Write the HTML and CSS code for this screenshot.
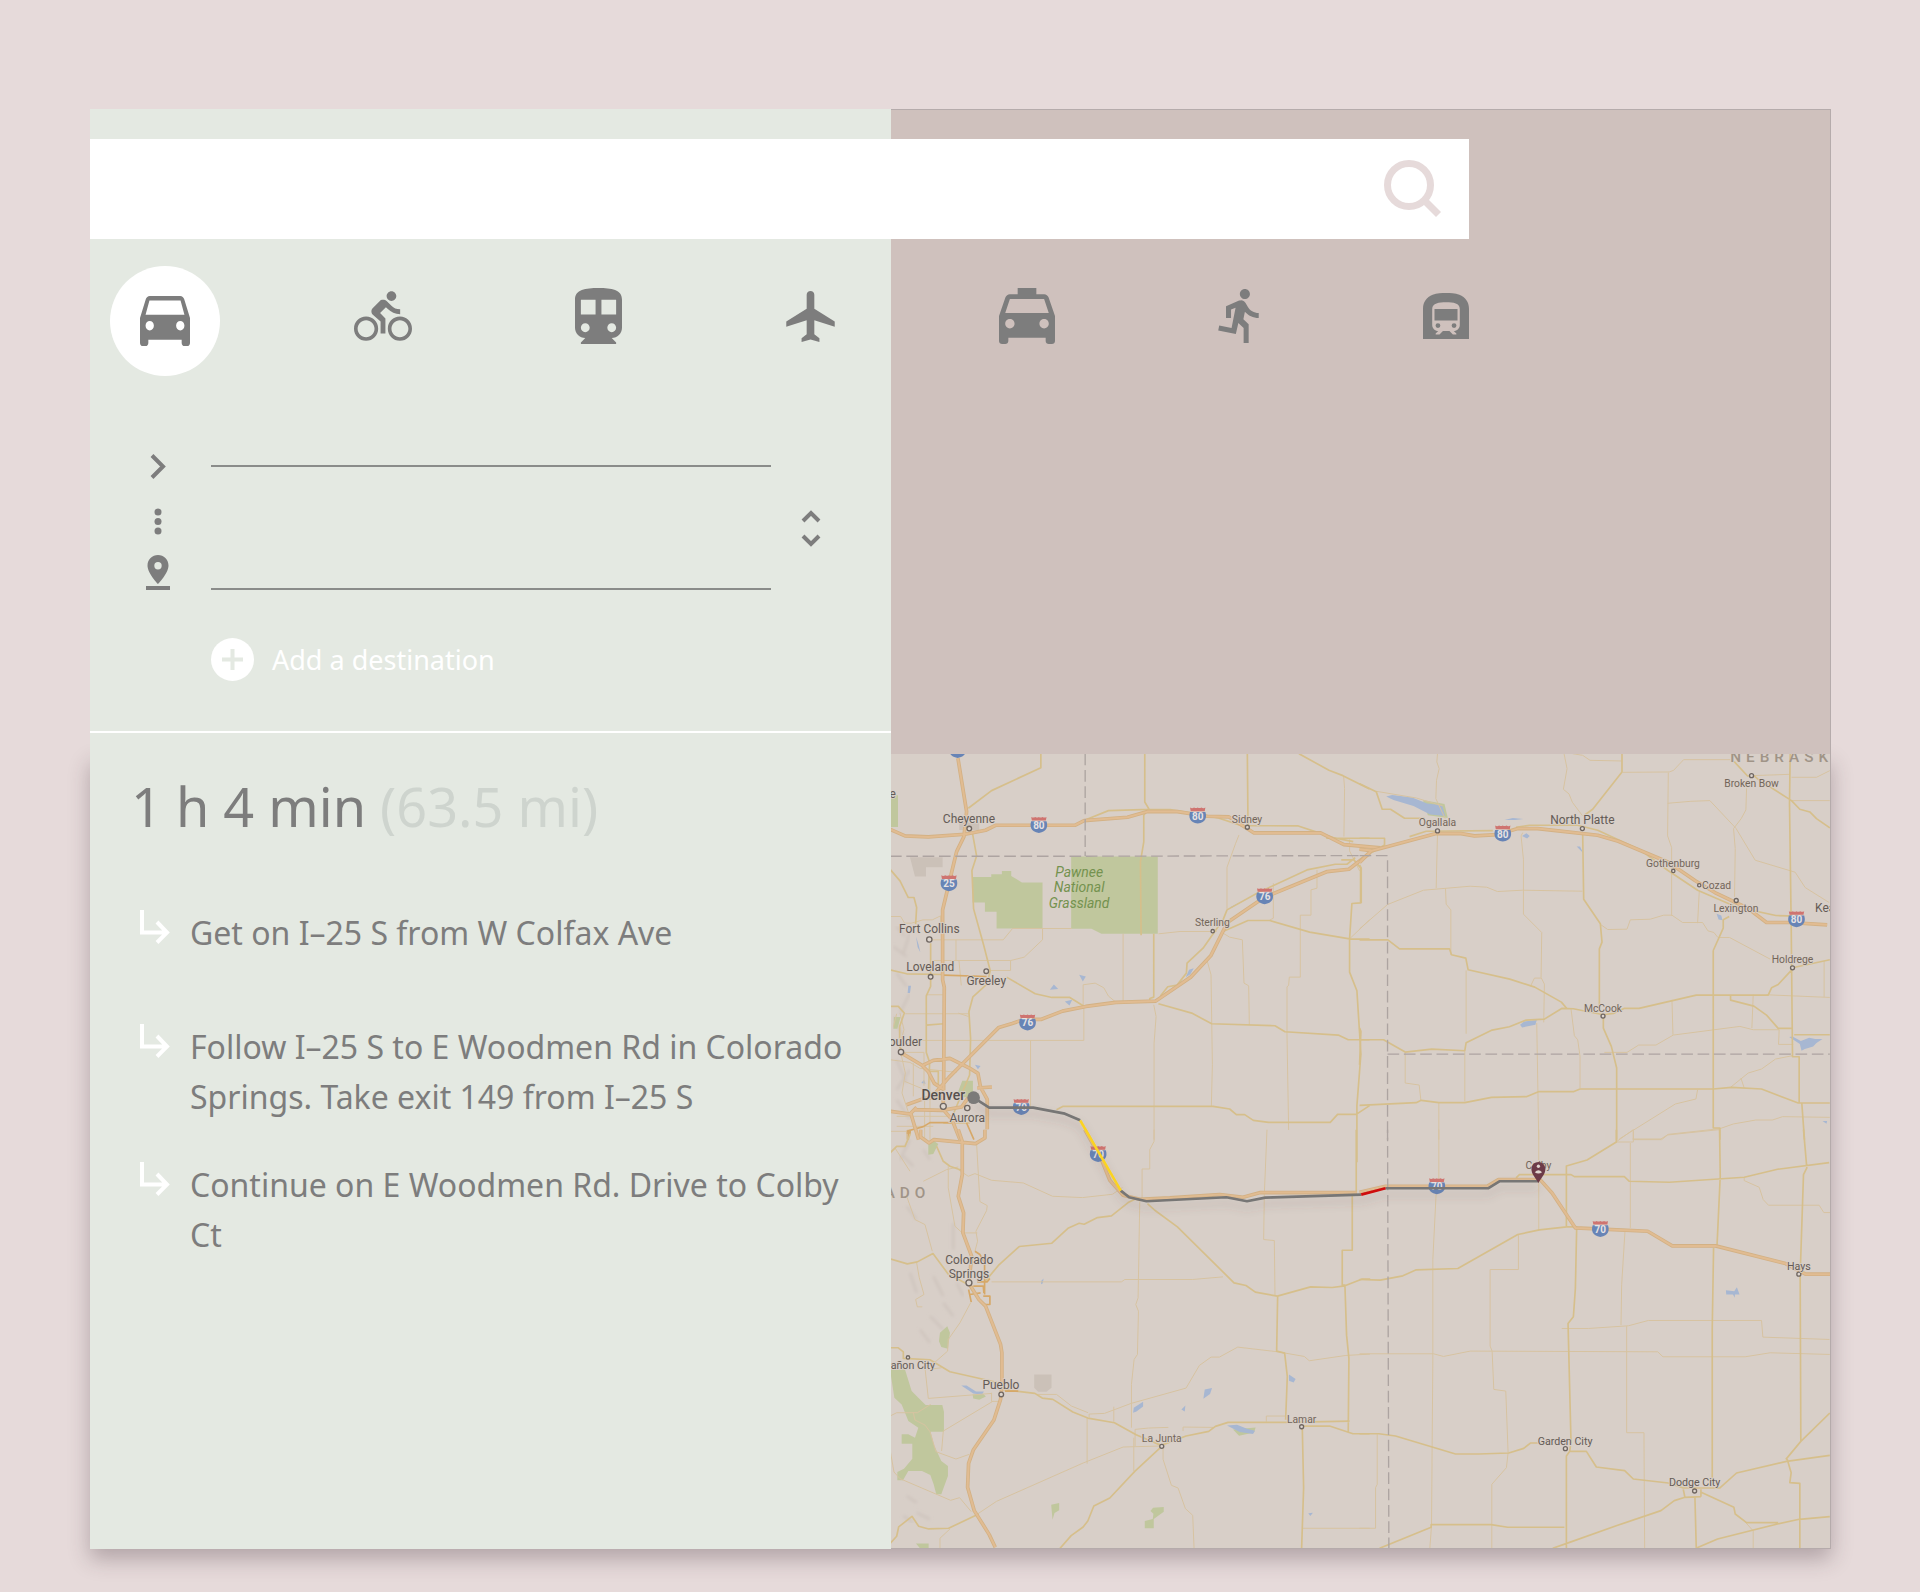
FILE: index.html
```html
<!DOCTYPE html>
<html lang="en">
<head>
<meta charset="utf-8">
<meta name="viewport" content="width=device-width, initial-scale=1">
<title>Directions</title>
<link rel="stylesheet" href="styles.css">
</head>
<body>
<main class="page">
<div class="card">
  <header class="topbar">
    <form class="search" role="search">
      <input class="search-input" type="search" aria-label="Search the map">
      <button class="search-button" type="button" aria-label="Search">
        <svg width="58" height="58" viewBox="0 0 58 58" fill="none" stroke="currentColor" stroke-width="7"><circle cx="25" cy="25" r="21.5"/><path d="M41 41l13.500 13.500"/></svg>
      </button>
    </form>
    <nav class="modes" aria-label="Travel mode">
      <button class="mode mode-active" type="button" aria-label="Car"><svg width="50" height="50" viewBox="3 5 18 16" preserveAspectRatio="none"><path d="M18.920 6.010C18.720 5.420 18.160 5 17.500 5h-11c-.66 0-1.210.42-1.420 1.010L3 12v8c0 .55.45 1 1 1h1c.55 0 1-.45 1-1v-1h12v1c0 .55.45 1 1 1h1c.55 0 1-.45 1-1v-8l-2.080-5.990zM6.500 16c-.83 0-1.500-.67-1.500-1.500S5.670 13 6.500 13s1.500.67 1.500 1.500S7.330 16 6.500 16zm11 0c-.83 0-1.500-.67-1.500-1.500s.67-1.500 1.500-1.500 1.500.67 1.500 1.500-.67 1.500-1.500 1.500zM5 11l1.400-4.600h11.200L19 11H5z"/></svg></button>
      <button class="mode" type="button" aria-label="Bicycle"><svg width="58" height="50" viewBox="0 1.500 24 20.500"><path d="M15.500 5.500c1.100 0 2-.9 2-2s-.9-2-2-2-2 .9-2 2 .9 2 2 2zM5 12c-2.800 0-5 2.200-5 5s2.200 5 5 5 5-2.200 5-5-2.200-5-5-5zm0 8.500c-1.900 0-3.500-1.600-3.500-3.500s1.600-3.500 3.500-3.500 3.500 1.600 3.500 3.500-1.600 3.500-3.500 3.500zm5.800-10l2.400-2.400.8.8c1.300 1.300 3 2.100 5.100 2.100V9c-1.500 0-2.700-.6-3.600-1.500l-1.900-1.900c-.5-.4-1-.6-1.600-.6s-1.100.2-1.400.6L7.800 8.400c-.4.4-.6.9-.6 1.400 0 .6.200 1.100.6 1.400L11 14v5h2v-6.200l-2.200-2.300zM19 12c-2.800 0-5 2.200-5 5s2.200 5 5 5 5-2.200 5-5-2.200-5-5-5zm0 8.500c-1.900 0-3.500-1.600-3.500-3.500s1.600-3.500 3.500-3.500 3.500 1.600 3.500 3.500-1.600 3.500-3.500 3.500z"/></svg></button>
      <button class="mode" type="button" aria-label="Train"><svg width="47" height="56" viewBox="4 2 16 19"><path d="M12 2c-4.420 0-8 .5-8 4v9.500C4 17.430 5.570 19 7.500 19L6 20.500v.5h12v-.5L16.500 19c1.930 0 3.500-1.570 3.500-3.500V6c0-3.500-3.580-4-8-4zM7.500 17c-.83 0-1.500-.67-1.500-1.500S6.670 14 7.500 14s1.500.67 1.500 1.500S8.330 17 7.500 17zm3.500-6H6V6h5v5zm5.500 6c-.83 0-1.500-.67-1.500-1.500s.67-1.500 1.500-1.500 1.500.67 1.500 1.500-.67 1.500-1.500 1.500zm1.500-6h-5V6h5v5z"/></svg></button>
      <button class="mode" type="button" aria-label="Plane"><svg width="49" height="51" viewBox="2 2 19 20"><path d="M21 16v-2l-8-5V3.500c0-.83-.67-1.500-1.500-1.500S10 2.670 10 3.500V9l-8 5v2l8-2.500V19l-2 1.500V22l3.500-1 3.500 1v-1.500L13 19v-5.500l8 2.500z"/></svg></button>
      <button class="mode" type="button" aria-label="Taxi"><svg width="56" height="56" viewBox="3 3 18 18"><path d="M18.920 6.010C18.720 5.420 18.160 5 17.500 5H15V3H9v2H6.500c-.66 0-1.210.42-1.420 1.010L3 12v8c0 .55.45 1 1 1h1c.55 0 1-.45 1-1v-1h12v1c0 .55.45 1 1 1h1c.55 0 1-.45 1-1v-8l-2.080-5.990zM6.500 16c-.83 0-1.500-.67-1.500-1.500S5.670 13 6.500 13s1.500.67 1.500 1.500S7.330 16 6.500 16zm11 0c-.83 0-1.500-.67-1.500-1.500s.67-1.500 1.500-1.500 1.500.67 1.500 1.500-.67 1.500-1.500 1.500zM5 11l1.500-4.500h11L19 11H5z"/></svg></button>
      <button class="mode" type="button" aria-label="On foot"><svg width="41" height="56" viewBox="2.800 1.400 16.300 21.600"><path d="M13.490 5.480c1.100 0 2-.9 2-2s-.9-2-2-2-2 .9-2 2 .9 2 2 2zm-3.600 13.900l1-4.400 2.100 2v6h2v-7.500l-2.100-2 .6-3c1.300 1.500 3.300 2.500 5.500 2.500v-2c-1.900 0-3.500-1-4.300-2.400l-1-1.600c-.4-.6-1-1-1.700-1-.3 0-.5.1-.8.1l-5.200 2.200v4.700h2v-3.400l1.800-.7-1.600 8.100-4.900-1-.4 2 7 1.400z"/></svg></button>
      <button class="mode" type="button" aria-label="Subway"><svg width="46" height="46" viewBox="2 2 20 20"><path d="M17.800 2.800C16 2.090 13.860 2 12 2s-4 .09-5.800.8C3.530 3.840 2 6.050 2 8.860V22h20V8.860c0-2.810-1.530-5.020-4.200-6.060zm.2 13.080c0 1.450-1.180 2.620-2.630 2.620l1.130 1.120V20H15l-1.500-1.500h-2.830L9.170 20H7.500v-.38l1.120-1.120C7.180 18.500 6 17.320 6 15.880V9c0-2.630 3-3 6-3 3.320 0 6 .38 6 3v6.880zM7 9h10v5H7zM8.500 15.100a1.050 1.050 0 100 2.100 1.050 1.050 0 000-2.100zm7 0a1.050 1.050 0 100 2.100 1.050 1.050 0 000-2.100z" fill-rule="evenodd"/></svg></button>
    </nav>
  </header>

  <section class="sidebar">
    <form class="planner">
      <div class="route">
        <div class="route-marks" aria-hidden="true">
          <svg width="26" height="25" viewBox="0 0 26 25" fill="none" stroke="currentColor" stroke-width="4"><path d="M7 1.500l11 11-11 11"/></svg>
          <svg width="26" height="36" viewBox="0 0 26 36" fill="currentColor"><circle cx="13" cy="13" r="3.500"/><circle cx="13" cy="22.500" r="3.500"/><circle cx="13" cy="32" r="3.500"/></svg>
          <svg width="26" height="35" viewBox="0 0 26 35" fill="currentColor"><path fill-rule="evenodd" d="M13 0C7.300 0 2.500 4.500 2.500 10.500 2.500 18.500 13 29 13 29s10.500-10.500 10.500-18.500C23.500 4.500 18.700 0 13 0zm0 7a3.700 3.700 0 110 7.400A3.700 3.700 0 0113 7z"/><path d="M1 31h24v4H1z"/></svg>
        </div>
        <div class="fields">
          <input class="field" type="text" aria-label="Starting point">
          <input class="field" type="text" aria-label="Destination">
        </div>
        <button class="swap" type="button" aria-label="Swap start and destination">
          <svg width="20" height="38" viewBox="0 0 20 38" fill="none" stroke="currentColor" stroke-width="4"><path d="M2 12l8-8 8 8M2 27l8 8 8-8"/></svg>
        </button>
      </div>
      <button class="add" type="button">
        <svg width="43" height="43" viewBox="0 0 43 43"><circle cx="21.500" cy="21.500" r="21.500" fill="currentColor"/><path class="add-plus" d="M21.500 11v21M11 21.500h21"/></svg>
        <span>Add a destination</span>
      </button>
    </form>
    <div class="directions">
      <h1 class="summary">1 h 4 min <span class="distance">(63.5 mi)</span></h1>
      <ol class="steps">
        <li class="step"><svg class="turn" width="30" height="34" viewBox="0 0 30 34"><path d="M2 0v22.500h24M17 12l10 10.500-10 10"/></svg><span>Get on I–25 S from W Colfax Ave</span></li>
        <li class="step"><svg class="turn" width="30" height="34" viewBox="0 0 30 34"><path d="M2 0v22.500h24M17 12l10 10.500-10 10"/></svg><span>Follow I–25 S to E Woodmen Rd in Colorado Springs. Take exit 149 from I–25 S</span></li>
        <li class="step"><svg class="turn" width="30" height="34" viewBox="0 0 30 34"><path d="M2 0v22.500h24M17 12l10 10.500-10 10"/></svg><span>Continue on E Woodmen Rd. Drive to Colby Ct</span></li>
      </ol>
    </div>
  </section>

  <svg class="map" viewBox="0 0 2820 2385" preserveAspectRatio="xMidYMid slice" role="img" aria-label="Route from Denver to Colby">
    <defs>
      <g id="shield">
        <path class="shield-top" d="M-23-24q6 4 12 0 6 3 11 0 5 3 11 0 6 4 12 0l-2 11H-21z"/>
        <path class="shield-body" d="M-23-11h46c5 16 2 30-23 35-25-5-28-19-23-35z"/>
      </g>
      <filter id="soft" x="-5%" y="-30%" width="110%" height="180%"><feDropShadow dx="0" dy="18" stdDeviation="12" flood-color="#5a4a4a" flood-opacity=".25"/></filter>
      <filter id="relief" x="0" y="0" width="100%" height="100%"><feGaussianBlur stdDeviation="4"/></filter>
    </defs>

    <!-- north-west: Cheyenne, Fort Collins, Denver -->
    <g transform="translate(-3 -42)">
      <path class="relief" d="M20 560l25 30M10 620l40 30M60 580l-20 60M20 700l30 40M60 760l-30 60M10 830l30 60M20 960l30 70M60 990l-40 60M20 1080l40 60"/>
      <path class="town" d="M60 352h98v30h-50v28H75zM208 248h60v22h-60z"/>
      <path class="park" d="M0 166h24v95H0zM248 411h56v-8h32v-10h28v15l32 20h62v138H320v-50h-35v-28h-37zM544 350h260v232H635l-30-15h-61zM12 832h20l-10 35H10zM205 1055l12-32h32v50h-40z"/>
      <path class="water" d="M78 590l8 25 5 22-8-15zM55 738h8l-3 22h-7zM480 750l12-16 13 14zM568 705l20 5-9 15zM525 785l22-5-8 17zM888 712l10-22 14-5-10 18zM1020 503l28-14-20 14zM94 1030l8-10 5 12zM255 975l17 4-8 10z"/>
      <path class="minor" d="M1362 107l3 38-2 145M1048 285l-10 25-26 72v125M1151 430v105l-11 6M1282 390v55l-18 5v76h-32v186h-33l-2 25-5 4v140l5 290M118 600h222l28-34h178M458 566v34l-55 52-40 10H120M198 600v62M362 662v30h-62M207 662l7 75M108 765h50M46 822h190M700 582v205M580 800v-65l36-5 26 14 14 25 22 18M582 800v102H70M422 902v200M806 582l65-7h110M1000 580l20 12 38 8 5 130 14 8 2 118M950 655l14 50 4 270-3 125M792 795l7 35-6 80v290M1380 298v35l30 60M1440 540l-60 57M0 530h32l12 20h20l35-10h28l25-12v30M20 822l-10 40M42 938h60v100M30 820l12 50-14 50 18 80-10 60 20 60M0 960l60 8 30 18 110 12M44 1025l60 25v150M70 970v100M120 990v210M20 1130h260M20 1160h110M0 1175h50v25M205 820l30 10"/>
      <path class="major" d="M453 41v42L305 152l-70 53M0 388l30 35 25 50h17l8 30-3 50M248 282l12 66-14 44 5 115 30 108 20 78-10 40-42 38-12 45 5 80-3 110-50 120M122 610v130l-13 28v170l10 30-4 100M109 856l52-4M0 690l50 12 110 2M350 712l86 50 50 11h54l40 25M765 41v145l12 20-15 20v80l-10 60 2 220M792 582v190l-12 4v12M1073 41l2 215M1228 41l90 50 42 16 80 40M586 240l70-28 100-3h85l60 10 85 15 70 23 170 1 60 20 45 15 60 12M1310 295h130M1000 540l12-30 90-50 150-70 85-17h35l25-20M1000 540l-60 85-48 45-2 30-28 36-28 5-22 28M1000 575l75-33h65l120 35 120 20 60 1M1355 360h38l20 24v105l-26 2-7 106v100l22 56 12 190-12 155v170M806 792l100 28 60 32 190 6 30 18 160 10 30 14h64M500 1110l20-10h450l50 8 20 17h25l26 17 46 6h185l22-24h56l40-26M0 800l25 0 18 20-14 40v60l10 20M160 1150h80M110 995h35v40"/>
      <path class="arterial" d="M160 706l130 4M50 1175l50-14 20-12h70M55 1200v-30M230 1150l22 50"/>
      <g class="highway-edge"><path id="nw-hwy" d="M204 55l26 160-8 75-22 45-30 125-12 50v210l5 22-2 310M0 268l45 20 70 3 110-8 62-12 30-15h238l28-14 130-10 60-17h90l90 14 65 2 75 48h200l70 35 110 10M1440 340l-62 48-65 7-190 78-110 75-50 100-60 64-105 72-120 4-90 12-70 14-65 25h-50l-36 12-40 12-110 110-40 40-40 46M35 940l60 36 20 20 18 35 30 20M100 976l30-14 50-6 60 30 24 15 8 42 20 36v90M262 1045l44-3M50 1095l50-18 60-5M75 1110l80 2 60-10 20-28M0 1115l60 8 20-20M62 1120l24 80M160 1060v50l26 30 24 60"/></g>
      <use href="#nw-hwy" class="highway"/>
      <path class="border" d="M586 41v307M0 349h586l854-2"/>
      <use href="#shield" x="203" y="30"/><use href="#shield" x="447" y="255"/><use href="#shield" x="924" y="227"/><use href="#shield" x="177" y="430"/><use href="#shield" x="1125" y="469"/><use href="#shield" x="413" y="848"/><use href="#shield" x="394" y="1102"/>
      <g class="shield-no"><text x="447" y="267">80</text><text x="924" y="239">80</text><text x="177" y="442">25</text><text x="1125" y="481">76</text><text x="413" y="860">76</text><text x="394" y="1114">70</text></g>
      <g class="dot"><circle cx="238" cy="266" r="7"/><circle cx="118" cy="599" r="8"/><circle cx="122" cy="711" r="7"/><circle cx="289" cy="694" r="7"/><circle cx="33" cy="937" r="8"/><circle cx="160" cy="1100" r="9"/><circle cx="232" cy="1105" r="8"/><circle cx="1073" cy="262" r="6"/><circle cx="969" cy="574" r="5"/></g>
      <g class="city"><text x="237" y="250">Cheyenne</text><text x="118" y="581">Fort Collins</text><text x="121" y="695">Loveland</text><text x="289" y="735">Greeley</text><text x="35" y="920">Boulder</text><text x="232" y="1147">Aurora</text><text x="8" y="174">e</text></g>
      <g class="city city-main"><text x="160" y="1080">Denver</text></g>
      <g class="city city-small"><text x="1072" y="249">Sidney</text><text x="968" y="560">Sterling</text></g>
      <g class="park-name"><text x="568" y="410">Pawnee</text><text x="568" y="457">National</text><text x="568" y="503">Grassland</text></g>
    </g>

    <!-- north-east: Nebraska -->
    <g transform="translate(1407 -42)">
      <path class="park" d="M190 180l65 12 10 42-60-8z"/>
      <path class="water" d="M80 170l18-5 60 8 45 18 45 5 9 32-45-4-50-26-60-18zM435 240l25-6 32 3-25 3zM488 288l13-8 10 8-8 8zM652 320l10 0 10 20zM1072 522l14 5 4 14-12-2zM482 855l12-10 38-4-4 14-40 8zM1290 892l10-2 25 14 25-10 18 4 22 0-18 12-10 10-25 8-10 5-5-20zM1390 1144l14 0-2 8z"/>
      <path class="minor" d="M234 41l-2 25 7 20-8 35-2 55 28 60M50 154l120 20 80 24M234 280l-4 165M614 41l9 45-11 62 17 14 10 25 30 40M640 41l30 5 22 15 95 2M790 97l140-1 13-5 30-32h140M927 98l-2 190 12 35v205M925 190l70-6 57-2 78 83 58 96 120 36 30 46 72 45M1162 145l-2 65-14 26-23 30 5 60-2 145M1297 112h75l40-20M1180 107l112-4M1296 182h116M0 567l84-73 108-43 140-12 50 3 32 13 75-4 180 3M258 445l2 48 14 17v135M490 278l-5 10 7 70v165l55 55-2 135 10 20-2 115M513 740l12-25h20M725 555l20 14 58-1 10-28 60-2 40-12h25l32 22h60l16 25 18 5 12 15h35l122 65M1020 455l-5 95M320 692v190M137 938v92l42 6 5 45M316 935v150M532 850l6 350M635 808l10 80 10 12 7 50v95M735 938h68l35-22h52l52-30 200-26 40 10h78M938 780l3 105M1182 765l-4 100M1260 870l-2 44h44M1222 765l190 8M1395 664v108M780 1198l168-105 62-15 5-28M822 1200v-25M1115 1042l52-42 40-12 42-30 50-10M1145 1015l10 30M820 1198h85l22-14 155-17 40-14 68-12h50l30-10 142 2M238 1090v110"/>
      <path class="major" d="M0 131l50 24 18 53h25l42 27h60M0 295h75v20l-60 35M788 41v55l-88 112-25 18M1125 65l40 43h20l12 10 100 64 25 26 30 8 20 20 40 28M1293 41l-2 150 5 360 4 400 20 0v140M0 600h85l35 27h150l6 18 43 10 7 35 125 28 75 24 80 45 17 20M0 900h72l65 37 80-9 99 5 4-24 78-38 52-10 50-20 55-3 52-32 35 1 90 18 30-4 32-15h45l172-40h216l10-22 20-10 40-43M1300 684l112-24M1062 632v533h20v35M1062 632l30-67v-25l18-10M670 285l3 193 50 74 5 55-8 20v190M732 835v30l24 55 16 65v215M0 1097l170-8 15-7 53 7h78l80-16 105-2 36-15h105l20-8h400l55-5 90 5 110 42h95M1328 1092l8 108M1114 765v16l70 18 38 27 35 40h43M1305 885h107M150 290l50-16 200-2M470 262l40-6h145l60 15 130 60 80 60 90 60 115 50 120 26 62 2M0 375l5 10v105M0 865l4 10-4 100"/>
      <g class="highway-edge"><path id="ne-hwy" d="M0 328l35 4M0 368l35-35 195-52h75l40 7 70-4 60-18h60l180 20 62 18 150 63 80 55 60 36 100 48 55 42h70l112 7"/></g>
      <use href="#ne-hwy" class="highway"/>
      <path class="border" d="M0 347h84v853M84 943h1328"/>
      <use href="#shield" x="430" y="281"/><use href="#shield" x="1312" y="538"/>
      <g class="shield-no"><text x="430" y="293">80</text><text x="1312" y="550">80</text></g>
      <g class="dot"><circle cx="234" cy="273" r="6"/><circle cx="669" cy="266" r="6"/><circle cx="942" cy="393" r="5"/><circle cx="1020" cy="436" r="5"/><circle cx="1131" cy="482" r="6"/><circle cx="1177" cy="107" r="6"/><circle cx="1300" cy="684" r="6"/><circle cx="731" cy="829" r="6"/></g>
      <g class="city city-small"><text x="234" y="258">Ogallala</text><text x="941" y="380">Gothenburg</text><text x="1072" y="446">Cozad</text><text x="1130" y="515">Lexington</text><text x="1177" y="141">Broken Bow</text><text x="1300" y="671">Holdrege</text><text x="731" y="817">McCook</text></g>
      <g class="city"><text x="669" y="252">North Platte</text><text x="1398" y="516">Kea</text></g>
      <text class="state" x="1113" y="67">NEBRASK</text>
    </g>

    <!-- south-west: Colorado Springs, Pueblo -->
    <g transform="translate(-3 1128)">
      <path class="relief" d="M40 80l30 30M60 30l-30 60M100 60l20 30M50 230l30 40M190 280v80M130 440l30 60M160 520l30 40M120 560l40 40M200 460l20 40M90 600l30 40M60 430l20 60M50 1100l30 20M80 1150l40 20M40 1160l30 20"/>
      <path class="town" d="M433 735h52v40l-15 12h-25l-12-12z"/>
      <path class="park" d="M115 45l18-10 12 8-15 30-15 2zM172 590l8 20-6 48-20-5-7-18 3-25zM0 720h45l20 65 20 20 22 22h50l5 20v60h-40l10 40 22 48 20 15v30l-20 55h-15l-8-30-10-28-25-12H55l-16 28H22v-25l20-10 25-30v-45H35v-28h20l20 10 10-30-30-20-20-50-22-20zM484 1126l24-5v22l-14 8-6 20zM782 1145l8-10 32-2v14l-30 22v28h-27v-22l24-6 2-16zM1030 900l68-6-5 15-45 10zM248 795l32-2 8 8-20 10-18-4zM78 1243h38v14H90z"/>
      <path class="water" d="M214 768h16l28 18 24 0-6 10-26-4zM453 455l8-8-2 14-5 3zM732 835l28-18v14l-20 15-10 4zM945 780l22-4-6 18-20 14zM875 840l12-12-2 18zM1198 735l20 14-6 10-14-5zM1012 888l30-2 30 12 24 6-6 10-40-6zM1256 1152l14-2-8 10z"/>
      <path class="minor" d="M260 41l10 175 22 12-2 15-32 62 5 30-8 30M205 120l30 20 20-8 50 20 95 8 88 40 90 4 90-10 30-20M100 155l70-35 35-8M175 110v65l20 115 22 20h45M50 200l25 70 30 15 22 80M80 400l8 45 14 50-25 15 5 22h15M242 520l-32 60-35 50-2 35-40 35M105 715l10 92 190-15M115 720l40-5M0 860l20-10h62l40-25M70 850l5 22 30 15 15 20 18 60 60 22 40-14M0 960l12 68 18 20 152 65 27-8 35 42M150 1257v-30l30-28M260 1156l60-40 260-115 120-48 110-3M305 457h390l10-7h203l92-8M750 215l-5 290-7 20 8 20-3 130-10 15-8 75v130M732 925v100M736 950v-50l40-4 60-2M592 865v138M598 864v-10l46-2 80-30 165-46 40-68 35-25h25l55-30 120 14 80 14 15 13 110-16 72-4M672 832v45M820 955v35l25 78 20 8 22 62 22 20 4 100M1132 0l-8 195-2 135 32 3 2 165M793 0v35l-13 25v58h-23v90M1130 860h58M1130 877v-17M880 905v-12l90 1M440 795h60l45 35 50 20M1240 1197h200M310 815l-150 90-5 60M305 790v26h20M15 55l45 70"/>
      <path class="major" d="M0 70l20-20h25l15-35V0M140 50l20 45 20 15 35 12M0 388l52 15 30-6 47-25 46 62 30 15 22 12M286 455l42-50 60-54 98-10 50-46 32-14 15 3 40-20 42-5 50-40 25-12M773 222l22 20 68 50 170 168 36 8 28 20 66 12 100-28 65 2 38-5 50-20h26M1164 500l-3 165 24 6 8 70-5 130M1388 195v167h-30v105l8 0 5 150 7 70-2 220M1400 0v190M0 655h25l15 12v20l80 4 60 36 80 18 60 14 15 20M335 780l100 12 22 14 32 4 60 38 45 18 80 14 65 36 75 32 75-28 68-14 20-15 38-12h175l190-4M1240 890h80l70 23h50M1238 895l4 180-6 182M815 952l-80 74-75 80-48 24-18 45-14 18-36 26-35 40M0 1243l20-22 6-28 40-32 20 30 30 8 60-2 90-43"/>
      <path class="arterial" d="M60 0v10h-10M255 365l15 10 14 25v95M236 480l8 38M262 457h30l8-10M250 470h30l2 20M280 500h20v25h-18M240 495l32-5M345 785h40"/>
      <g class="highway-edge"><path id="sw-hwy" d="M92 0v22l25 18 15-10 125 12 28-17V0M205 0l12 35v100l-12 65 16 50-2 60 26 70-8 82 30 48 20 20 45 115 4 25v100l-4 40-20 62-62 90-14 40-3 72 20 70 45 72 18 38M585 0l50 90 25 62 40 45 50 12 90-4 150-10 70 8 52-14h290"/></g>
      <use href="#sw-hwy" class="highway"/>
      <use href="#shield" x="625" y="73"/>
      <g class="shield-no"><text x="625" y="85">70</text></g>
      <g class="dot"><circle cx="237" cy="460" r="9"/><circle cx="334" cy="795" r="7"/><circle cx="54" cy="684" r="5"/><circle cx="816" cy="951" r="6"/><circle cx="1236" cy="892" r="6"/></g>
      <g class="city"><text x="238" y="403">Colorado</text><text x="237" y="444">Springs</text><text x="333" y="780">Pueblo</text></g>
      <g class="city city-small"><text x="816" y="938">La Junta</text><text x="1236" y="880">Lamar</text></g>
      <g class="city city-mid"><text x="58" y="719">Cañon City</text></g>
      <text class="state state-end" x="121" y="206">ADO</text>
    </g>

    <!-- south-east: Kansas -->
    <g transform="translate(1407 1128)">
      <path class="water" d="M1100 482l25 3 8-12 8 22-14 0v10l-6-10-20 0z"/>
      <path class="minor" d="M238 0v150M230 190l-10 200v300l-4 500-5 67M538 0v303M813 40v255M770 37h52V0l-52 37M822 30h85l18-14 155-16M797 305l-10 160-2 122M607 597l80 0 120-8 60-16h340l4 50 200 7M802 590v320h52l2 347M477 316v104h-85v230l6 15 5 115 36 5 7 185-5 45-44 50v192M0 673h222l30 8 80-16 563 2 16 15 247 0 75-12 179 5M53 915v150l-5 10v122H0M1155 145v8l45 20 12 37 16 17h152l14 22h20M1158 1178l24 27v52"/>
      <path class="major" d="M470 145l10-10h155l10 6h150l15 14 120 3 225-15 100-24 155-20M771 0v37l-88 54-62 18v185M1081 0l2 140-10 215M1333 0l10 115-10 20-10 300 2 500M0 450l62 2 68-13 40-18 125-4 180-102 65-14 82-9h30l-4 185-6 85-16 20 9 360M1063 355l-4 240v450M0 913h58l50 7 180 54h70l90-3 45-14 20-16h45M633 950l-2 16 50 0 30 47 85 11 26 25 105 12 45 15h110l50-45 150-35 130-18M1280 990l45-54 87-85M1284 990l12 40-4 30 30 2v195M631 966l-10 14v277M615 1194H445l-50-8H215v8L60 1257M580 1257l40-14 155-55 130-44 40-30 32-10 48-2M972 1080l5 24M1025 1080v22M1007 1104l4 153M1010 1257l65-28 180-45 65-14 92-8M1024 1088l100 46 4 20 34 26h95"/>
      <g class="highway-edge"><path id="se-hwy" d="M0 188l78-18h305l34-20h125l36 40 70 105 217 10 74 44h130l210 53 60 32h75"/></g>
      <use href="#se-hwy" class="highway"/>
      <path class="border" d="M84 0l4 1257"/>
      <use href="#shield" x="232" y="170"/><use href="#shield" x="723" y="298"/>
      <g class="shield-no"><text x="232" y="182">70</text><text x="723" y="310">70</text></g>
      <g class="dot"><circle cx="618" cy="958" r="6"/><circle cx="1006" cy="1085" r="6"/><circle cx="1319" cy="434" r="6"/></g>
      <g class="city city-small"><text x="537" y="118">Colby</text></g>
      <g class="city city-mid"><text x="617" y="946">Garden City</text><text x="1006" y="1071">Dodge City</text><text x="1319" y="420">Hays</text></g>
    </g>

    <!-- the planned route and its two ends -->
    <g transform="translate(-3 -42)">
      <g class="route-line" filter="url(#soft)">
        <path class="leg" d="M251 1074l47 30h132l95 18 46 20M693 1353l25 20 52 12 240-12 62 12 55-11 288-9M1488 1346h308l34-21h117"/>
        <path class="leg leg-slow" d="M571 1142l122 211"/>
        <path class="leg leg-jam" d="M1415 1365l73-19"/>
      </g>
      <circle class="start" cx="251" cy="1074" r="19"/>
      <path class="pin" d="M1947 1330c-8-14-21-27-21-42a21 21 0 0142 0c0 15-13 28-21 42z"/>
      <g class="pin-face"><circle cx="1947" cy="1280" r="5"/><path d="M1936 1298q11-12 22 0-11 7-22 0z"/></g>
    </g>
  </svg>
</div>
</main>
</body>
</html>
```
FILE: styles.css
```css
* { box-sizing: border-box; }

:root {
  --page: #e6dada;
  --panel: #e4e9e2;
  --taupe: #cfc1bd;
  --edge: #b5abab;
  --ink: #7d7d7d;
  --map: #d8cfc8;
}

body {
  margin: 0;
  background: var(--page);
  color: var(--ink);
  font-family: "Noto Sans", "Open Sans", sans-serif;
}

button, input {
  margin: 0;
  padding: 0;
  border: 0;
  background: none;
  color: inherit;
  font: inherit;
}

button { cursor: pointer; }
svg { display: block; flex: none; }

.page {
  isolation: isolate;
  padding: 109px 89px 42px 90px;
}

.card {
  display: grid;
  grid-template-columns: minmax(0, 46fr) minmax(0, 54fr);
  grid-template-rows: auto 410px auto;
  background: var(--taupe);
  box-shadow: inset -1px 1px 0 var(--edge);
}

/* tint behind the left column, running up under the top bar */
.card::before {
  content: "";
  grid-area: 1 / 1 / 4 / 2;
  background: var(--panel);
}

/* drop shadow belongs to the lower part of the card only */
.card::after {
  content: "";
  grid-area: 3 / 1 / 4 / 3;
  z-index: -1;
  box-shadow: 0 10px 20px rgba(60, 40, 50, 0.3);
}

.topbar {
  grid-area: 1 / 1 / 2 / 3;
  width: 79.2%;
  padding-top: 30px;
}

.search {
  display: flex;
  align-items: center;
  height: 100px;
  padding-right: 27px;
  background: #fff;
}

.search-input {
  flex: 1;
  min-width: 0;
  height: 100%;
  padding: 0 40px;
  font-size: 32px;
}

.search-button { color: var(--page); }

.modes {
  display: flex;
  justify-content: space-between;
  margin-top: 49px;
  padding-left: 50px;
}

.mode {
  display: flex;
  align-items: center;
  justify-content: center;
  height: 56px;
}

.mode svg { fill: var(--ink); }

.mode-active {
  width: 110px;
  height: 110px;
  margin: -22px -30px -32px;
  border-radius: 50%;
  background: #fff;
}

.sidebar { grid-area: 2 / 1 / 4 / 2; }

.planner {
  padding: 61px 70px 50px 55px;
  border-bottom: 2px solid #fff;
}

.route {
  display: flex;
  align-items: flex-end;
}

.route-marks {
  display: flex;
  flex-direction: column;
  gap: 20px;
  margin-right: 40px;
}

.fields {
  flex: 1;
  display: flex;
  flex-direction: column;
  gap: 61px;
}

.field {
  width: 100%;
  height: 62px;
  border-bottom: 2px solid #8a8c8a;
  font-size: 27px;
}

.swap {
  margin: 0 0 43px 30px;
}

.add {
  display: flex;
  align-items: center;
  gap: 18px;
  margin: 48px 0 0 66px;
  color: #fff;
  font-size: 27px;
  line-height: 43px;
}

.add-plus {
  stroke: var(--panel);
  stroke-width: 4;
}

.directions { padding: 37px 20px 36px 41px; }

.summary {
  margin: 0 0 66px;
  font-size: 54px;
  font-weight: 400;
  line-height: 72px;
}

.distance { color: #ced4ce; }

.steps {
  display: grid;
  gap: 38px;
  margin: 0;
  padding: 0 0 0 9px;
  list-style: none;
}

.step {
  display: flex;
  gap: 20px;
  min-height: 76px;
  font-size: 32px;
  line-height: 50px;
}

.turn {
  margin-top: 2px;
  fill: none;
  stroke: #fff;
  stroke-width: 4;
}

.map {
  grid-area: 3 / 2 / 4 / 3;
  width: 100%;
  height: 100%;
  min-height: 795px;
  border: solid var(--edge);
  border-width: 0 1px 1px 0;
  background: var(--map);
  font-family: Roboto, sans-serif;
}

.map path, .map use { stroke-linejoin: round; }

.park { fill: #c0c79d; }
.town { fill: #cbc1b8; }
.water { fill: #a7b7d2; }
.relief { fill: none; stroke: #cfc5be; stroke-width: 8; filter: url(#relief); }
.minor { fill: none; stroke: #d7c3a1; stroke-width: 3; }
.major { fill: none; stroke: #d6bf8b; stroke-width: 5; }
.arterial { fill: none; stroke: #d6a868; stroke-width: 5; }
.highway-edge { fill: none; stroke: #d3b184; stroke-width: 11; }
.highway { fill: none; stroke: #e1bc92; stroke-width: 6; }
.border { fill: none; stroke: #ada4a1; stroke-width: 4; stroke-dasharray: 35 14; }

.shield-top { fill: #cf7470; }
.shield-body { fill: #6784b6; }
.shield-no { fill: #e6e2e3; font-size: 30px; font-weight: 700; text-anchor: middle; }

.dot { fill: #ded6cf; stroke: #6f6661; stroke-width: 4; }

.city, .park-name {
  fill: #645b56;
  stroke: var(--map);
  stroke-width: 5px;
  paint-order: stroke;
  font-size: 36px;
  text-anchor: middle;
}

.city-small { fill: #73665a; font-size: 31px; }
.city-mid { font-size: 32px; }
.city-main { fill: #57504c; font-size: 42px; font-weight: 500; }
.park-name { fill: #74924f; stroke: none; font-size: 42px; font-style: italic; }

.state {
  fill: #a09487;
  font-size: 46px;
  font-weight: 500;
  letter-spacing: 15px;
}

.state-end { text-anchor: end; }

.leg { fill: none; stroke: #777675; stroke-width: 8; }
.leg-slow { stroke: #fbd324; }
.leg-jam { stroke: #cf0a0a; }
.start { fill: #7b7a79; }
.pin { fill: #6d3b48; }
.pin-face { fill: #e0d6d0; }
```
